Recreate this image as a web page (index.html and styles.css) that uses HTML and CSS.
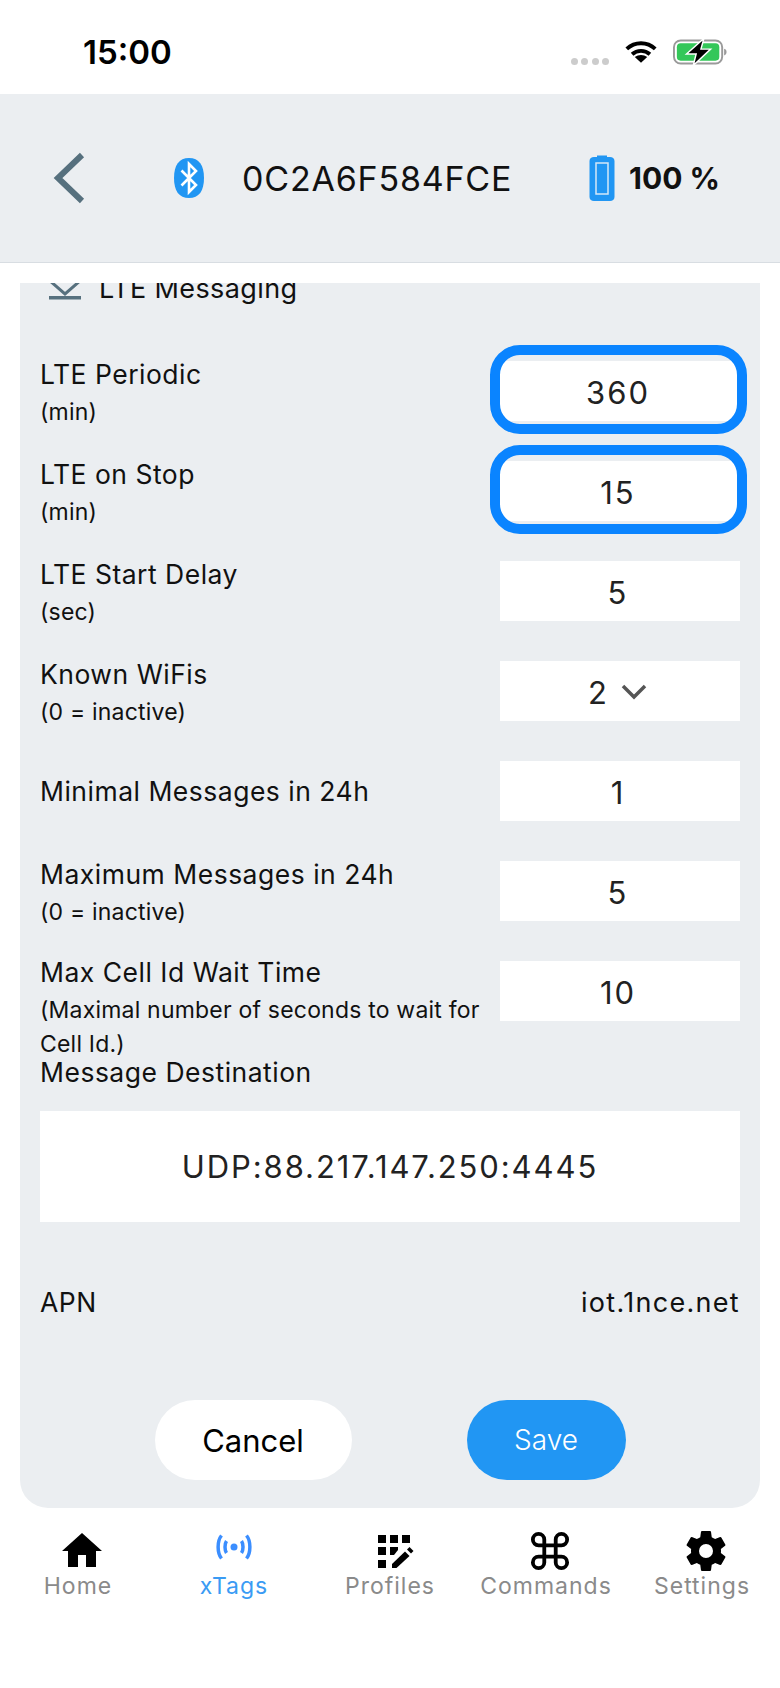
FILE: index.html
```html
<!DOCTYPE html>
<html lang="en">
<head>
    <meta charset="UTF-8">
    <meta name="viewport" content="width=device-width, initial-scale=1.0">
    <title>xTag LTE Messaging</title>
    <link rel="stylesheet" href="styles.css">
</head>
<body>
    <div class="status-bar">
        <div class="clock">15:00</div>
        <div class="status-icons">
            <div class="signal-dots"><span></span><span></span><span></span><span></span></div>
            <svg class="wifi" width="32" height="24" viewBox="0 0 36 26">
                <path d="M2 9.500C11 1 25 1 34 9.500" fill="none" stroke="#000" stroke-width="4.400"/>
                <path d="M8 15.500C13.500 10.500 22.500 10.500 28 15.500" fill="none" stroke="#000" stroke-width="4.400"/>
                <path d="M18 25L11 18.500C15 15.500 21 15.500 25 18.500Z" fill="#000"/>
            </svg>
            <svg class="charge" width="54" height="28" viewBox="0 0 56 28">
                <rect x="1" y="2" width="50" height="24" rx="7" fill="none" stroke="#9a9a9a" stroke-width="2"/>
                <rect x="4" y="5" width="44" height="18" rx="4" fill="#34c759"/>
                <path d="M53 10.500C55 11 55.500 12.500 55.500 14C55.500 15.500 55 17 53 17.500Z" fill="#9a9a9a"/>
                <path d="M32 0L14 16H24L21 28L39 11H29Z" fill="#000" stroke="#fff" stroke-width="1.500"/>
            </svg>
        </div>
    </div>

    <header class="top-bar">
        <svg class="back" width="36" height="52" viewBox="0 0 36 52">
            <path d="M29 3L5 26L29 49" fill="none" stroke="#56707e" stroke-width="6"/>
        </svg>
        <svg class="bluetooth" width="30" height="40" viewBox="0 0 30 40">
            <path d="M15 0C25 0 30 7 30 20C30 33 25 40 15 40C5 40 0 33 0 20C0 7 5 0 15 0Z" fill="#2196f3"/>
            <path d="M7.500 12.500L22 27L15 34V6L22 13L7.500 27.500" fill="none" stroke="#fff" stroke-width="2.600"/>
        </svg>
        <div class="device-id">0C2A6F584FCE</div>
        <svg class="device-battery" width="26" height="46" viewBox="0 0 26 46">
            <path d="M8 2V0.500H18V2H21C23.500 2 25.500 3.500 25.500 6V42C25.500 44.500 23.500 46 21 46H5C2.500 46 0.500 44.500 0.500 42V6C0.500 3.500 2.500 2 5 2Z" fill="#2196f3"/>
            <rect x="7" y="8" width="12" height="31" fill="#2196f3" stroke="#d5e8f8" stroke-width="1.500"/>
        </svg>
        <div class="device-percent">100 %</div>
    </header>

    <main class="card">
        <div class="section-title">
            <svg width="34" height="30" viewBox="0 0 34 30">
                <path d="M1 8L17 22L33 8" fill="none" stroke="#56707e" stroke-width="3"/>
                <rect x="1" y="24" width="32" height="3.500" fill="#56707e"/>
            </svg>
            <span>LTE Messaging</span>
        </div>

        <div class="row">
            <div class="label"><div class="name">LTE Periodic</div><div class="hint">(min)</div></div>
            <div class="input changed">360</div>
        </div>
        <div class="row">
            <div class="label"><div class="name">LTE on Stop</div><div class="hint">(min)</div></div>
            <div class="input changed">15</div>
        </div>
        <div class="row">
            <div class="label"><div class="name">LTE Start Delay</div><div class="hint">(sec)</div></div>
            <div class="input">5</div>
        </div>
        <div class="row">
            <div class="label"><div class="name">Known WiFis</div><div class="hint">(0 = inactive)</div></div>
            <div class="input">2
                <svg class="caret" width="28" height="16" viewBox="0 0 28 16">
                    <path d="M3 2L14 13L25 2" fill="none" stroke="#555" stroke-width="3.500"/>
                </svg>
            </div>
        </div>
        <div class="row">
            <div class="label single"><div class="name">Minimal Messages in 24h</div></div>
            <div class="input">1</div>
        </div>
        <div class="row">
            <div class="label"><div class="name">Maximum Messages in 24h</div><div class="hint">(0 = inactive)</div></div>
            <div class="input">5</div>
        </div>
        <div class="row">
            <div class="label wrapped"><div class="name">Max Cell Id Wait Time</div><div class="hint">(Maximal number of seconds to wait for Cell Id.)</div></div>
            <div class="input">10</div>
        </div>

        <div class="name dest-label">Message Destination</div>
        <div class="dest">UDP:88.217.147.250:4445</div>

        <div class="apn">
            <div class="name">APN</div>
            <div class="apn-value">iot.1nce.net</div>
        </div>

        <div class="actions">
            <button class="btn cancel">Cancel</button>
            <button class="btn save">Save</button>
        </div>
    </main>

    <nav class="tabs">
        <div class="tab">
            <svg width="40" height="40" viewBox="2 2 20 20"><path d="M10,20V14H14V20H19V12H22L12,3L2,12H5V20H10Z"/></svg>
            <span>Home</span>
        </div>
        <div class="tab active">
            <svg width="40" height="40" viewBox="0 0 40 40">
                <circle cx="20" cy="16" r="3.500" fill="#3b8eff"/>
                <g fill="none" stroke="#3b8eff" stroke-width="3.500">
                    <path d="M12.500 10C10.500 13 10.500 19 12.500 22"/>
                    <path d="M27.500 10C29.500 13 29.500 19 27.500 22"/>
                    <path d="M7.500 4.500C3 10 3 22 7.500 27.500"/>
                    <path d="M32.500 4.500C37 10 37 22 32.500 27.500"/>
                </g>
            </svg>
            <span>xTags</span>
        </div>
        <div class="tab">
            <svg width="40" height="40" viewBox="0 0 40 40">
                <rect x="4" y="4" width="8" height="8"/><rect x="16" y="4" width="8" height="8"/><rect x="28" y="4" width="8" height="8"/>
                <rect x="4" y="16" width="8" height="8"/><path d="M16 16H24V19L20 24H16Z"/>
                <rect x="4" y="29" width="8" height="8"/>
                <path d="M18 37V33L31 20.500L35.500 25L22.500 37Z"/><path d="M33 18.500L35.500 16L39.500 20L37 22.500Z"/>
            </svg>
            <span>Profiles</span>
        </div>
        <div class="tab">
            <svg width="40" height="40" viewBox="1.500 1.500 21 21"><path d="M6,2A4,4 0 0,1 10,6V8H14V6A4,4 0 0,1 18,2A4,4 0 0,1 22,6A4,4 0 0,1 18,10H16V14H18A4,4 0 0,1 22,18A4,4 0 0,1 18,22A4,4 0 0,1 14,18V16H10V18A4,4 0 0,1 6,22A4,4 0 0,1 2,18A4,4 0 0,1 6,14H8V10H6A4,4 0 0,1 2,6A4,4 0 0,1 6,2M16,18A2,2 0 0,0 18,20A2,2 0 0,0 20,18A2,2 0 0,0 18,16H16V18M14,10H10V14H14V10M6,16A2,2 0 0,0 4,18A2,2 0 0,0 6,20A2,2 0 0,0 8,18V16H6M8,6A2,2 0 0,0 6,4A2,2 0 0,0 4,6A2,2 0 0,0 6,8H8V6M18,8A2,2 0 0,0 20,6A2,2 0 0,0 18,4A2,2 0 0,0 16,6V8H18Z"/></svg>
            <span>Commands</span>
        </div>
        <div class="tab">
            <svg width="40" height="40" viewBox="2 2 20 20"><path d="M12,15.5A3.5,3.5 0 0,1 8.5,12A3.5,3.5 0 0,1 12,8.5A3.5,3.5 0 0,1 15.5,12A3.5,3.5 0 0,1 12,15.5M19.43,12.97C19.47,12.65 19.5,12.33 19.5,12C19.5,11.67 19.47,11.34 19.43,11L21.54,9.37C21.73,9.22 21.78,8.95 21.66,8.73L19.66,5.27C19.54,5.05 19.27,4.96 19.05,5.05L16.56,6.05C16.04,5.66 15.5,5.32 14.87,5.07L14.5,2.42C14.46,2.18 14.25,2 14,2H10C9.75,2 9.54,2.18 9.5,2.42L9.13,5.07C8.5,5.32 7.96,5.66 7.44,6.05L4.95,5.05C4.73,4.96 4.46,5.05 4.34,5.27L2.34,8.73C2.21,8.95 2.27,9.22 2.46,9.37L4.57,11C4.53,11.34 4.5,11.67 4.5,12C4.5,12.33 4.53,12.65 4.57,12.97L2.46,14.63C2.27,14.78 2.21,15.05 2.34,15.27L4.34,18.73C4.46,18.95 4.73,19.03 4.95,18.95L7.44,17.94C7.96,18.34 8.5,18.68 9.13,18.93L9.5,21.58C9.54,21.82 9.75,22 10,22H14C14.25,22 14.46,21.82 14.5,21.58L14.87,18.93C15.5,18.67 16.04,18.34 16.56,17.94L19.05,18.95C19.27,19.03 19.54,18.95 19.66,18.73L21.66,15.27C21.78,15.05 21.73,14.78 21.54,14.63L19.43,12.97Z"/></svg>
            <span>Settings</span>
        </div>
    </nav>
</body>
</html>
```

FILE: styles.css
```css
*, *::after {
    box-sizing: border-box;
}
html, body {
    margin: 0;
    height: 100%;
}
body {
    width: 780px;
    height: 1688px;
    overflow: hidden;
    background-color: #fff;
    color: #111;
    font-family: Inter, "Liberation Sans", sans-serif;
}
.status-bar {
    height: 94px;
    padding: 9px 53px 0 83px;
    display: flex;
    justify-content: space-between;
    align-items: center;
}
.clock {
    font-size: 33px;
    font-weight: 600;
    color: #000;
}
.status-icons {
    display: flex;
    align-items: center;
}
.signal-dots {
    display: flex;
    gap: 3.5px;
    margin: 19px 16px 0 0;
}
.signal-dots span {
    width: 7px;
    height: 7px;
    border-radius: 50%;
    background-color: #ccc;
}
.wifi {
    margin-right: 16px;
}
.top-bar {
    height: 169px;
    background-color: #ebeef1;
    border-bottom: 1px solid #d8dde2;
    display: flex;
    align-items: center;
    padding-left: 53px;
}
.back {
    margin-right: 85px;
}
.bluetooth {
    margin-right: 38px;
}
.device-id {
    font-size: 34px;
    width: 347px;
    letter-spacing: 0.8px;
}
.device-percent {
    font-size: 30px;
    font-weight: 700;
    margin-left: 14px;
}
.card {
    height: 1225px;
    margin: 20px 20px 0;
    padding: 0 20px;
    background-color: #ebeef1;
    border-radius: 0 0 28px 28px;
    overflow: hidden;
}
.section-title {
    height: 85px;
    margin-top: -11px;
    padding-left: 8px;
    display: flex;
    align-items: flex-start;
    gap: 17px;
    font-size: 27px;
    letter-spacing: 0.4px;
    line-height: 34px;
}
.row {
    min-height: 100px;
    display: flex;
    justify-content: space-between;
    align-items: flex-start;
}
.name {
    font-size: 26.5px;
    line-height: 34px;
    letter-spacing: 0.5px;
}
.hint {
    margin-top: 4px;
    font-size: 23px;
    line-height: 34px;
    letter-spacing: 0.2px;
}
.label {
    width: 450px;
}
.label.single {
    padding-top: 17px;
}
.label.wrapped {
    margin-top: -2px;
}
.input {
    position: relative;
    width: 240px;
    height: 60px;
    margin-top: 4px;
    padding: 2px 4px 0 0;
    background-color: #fff;
    display: flex;
    justify-content: center;
    align-items: center;
    font-size: 31px;
    letter-spacing: 2px;
    color: #222;
}
.input.changed::after {
    content: "";
    position: absolute;
    top: -16px;
    left: -10px;
    width: 257px;
    height: 89px;
    border: 10px solid #0a84ff;
    border-radius: 30px;
}
.caret {
    margin-left: 11px;
}
.dest-label {
    height: 56px;
    margin-top: -6px;
}
.dest {
    height: 111px;
    background-color: #fff;
    display: flex;
    justify-content: center;
    align-items: center;
    font-size: 31px;
    letter-spacing: 1.9px;
    color: #222;
}
.apn {
    height: 80px;
    margin-top: 40px;
    display: flex;
    justify-content: space-between;
    align-items: center;
}
.apn-value {
    font-size: 27px;
    letter-spacing: 1.3px;
}
.actions {
    margin-top: 58px;
    display: flex;
    justify-content: center;
    gap: 115px;
}
.btn {
    height: 80px;
    border: none;
    border-radius: 40px;
    font-family: inherit;
}
.cancel {
    width: 197px;
    background-color: #fff;
    color: #000;
    font-size: 31px;
}
.save {
    width: 159px;
    background-color: #2196f3;
    color: #fff;
    font-size: 28px;
    font-weight: 300;
}
.tabs {
    display: grid;
    grid-template-columns: repeat(5, 156px);
    margin-top: 23px;
}
.tab {
    display: flex;
    flex-direction: column;
    align-items: center;
    font-size: 23px;
    letter-spacing: 1px;
    line-height: 28px;
    color: #8a8a8a;
}
.tab svg {
    display: block;
    margin-left: 8px;
    fill: #000;
}
.tab span {
    margin-top: 1px;
}
.tab.active {
    color: #3a9bf4;
}
.tab.active svg {
    margin-left: 0;
}
```
